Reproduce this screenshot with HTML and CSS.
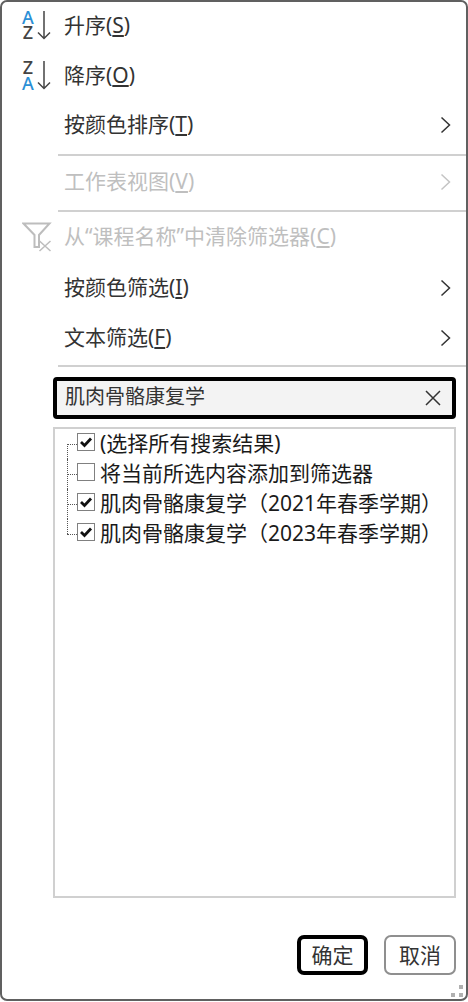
FILE: index.html
```html
<!DOCTYPE html>
<html lang="zh-CN">
<head>
  <meta charset="UTF-8">
  <title>筛选器菜单</title>
  <link rel="stylesheet" href="styles.css">
</head>
<body>

<div class="menu">

  <!-- Sort -->
  <div class="item">
    <span class="icon">
      <svg class="sort-icon" width="30" height="30" viewBox="0 0 30 30">
        <text class="sort-letter blue" x="8" y="14">A</text>
        <text class="sort-letter" x="8" y="29">Z</text>
        <path d="M24 1V28.5M18 22.5L24 28.5L30 22.5" fill="none" stroke="#444" stroke-width="1.5"/>
      </svg>
    </span>
    <span class="label">升序(<u>S</u>)</span>
  </div>
  <div class="item item-second">
    <span class="icon">
      <svg class="sort-icon" width="30" height="30" viewBox="0 0 30 30">
        <text class="sort-letter" x="8" y="14">Z</text>
        <text class="sort-letter blue" x="8" y="29.5">A</text>
        <path d="M24 1V28.5M18 22.5L24 28.5L30 22.5" fill="none" stroke="#444" stroke-width="1.5"/>
      </svg>
    </span>
    <span class="label">降序(<u>O</u>)</span>
  </div>
  <div class="item">
    <span class="icon"></span>
    <span class="label">按颜色排序(<u>T</u>)</span>
    <svg class="chevron" width="12" height="18" viewBox="0 0 12 18"><path d="M1.5 1.5L9.5 9L1.5 16.5" fill="none" stroke="#333" stroke-width="1.5"/></svg>
  </div>
  <div class="sep sep-first"></div>

  <div class="item item-short disabled">
    <span class="icon"></span>
    <span class="label">工作表视图(<u>V</u>)</span>
    <svg class="chevron" width="12" height="18" viewBox="0 0 12 18"><path d="M1.5 1.5L9.5 9L1.5 16.5" fill="none" stroke="#c4c4c4" stroke-width="1.5"/></svg>
  </div>
  <div class="sep"></div>

  <!-- Filter -->
  <div class="item item-clear disabled">
    <span class="icon">
      <svg class="filter-icon" width="30" height="30" viewBox="0 0 30 30"><path d="M1.5 1.5H27.5L17 13V25H12.5V13Z" fill="none" stroke="#bdbdbd" stroke-width="2"/><path d="M17.5 19L28.5 29M28.5 19L17.5 29" stroke="#bdbdbd" stroke-width="1.5"/></svg>
    </span>
    <span class="label">从“课程名称”中清除筛选器(<u>C</u>)</span>
  </div>
  <div class="item">
    <span class="icon"></span>
    <span class="label">按颜色筛选(<u>I</u>)</span>
    <svg class="chevron" width="12" height="18" viewBox="0 0 12 18"><path d="M1.5 1.5L9.5 9L1.5 16.5" fill="none" stroke="#333" stroke-width="1.5"/></svg>
  </div>
  <div class="item">
    <span class="icon"></span>
    <span class="label">文本筛选(<u>F</u>)</span>
    <svg class="chevron" width="12" height="18" viewBox="0 0 12 18"><path d="M1.5 1.5L9.5 9L1.5 16.5" fill="none" stroke="#333" stroke-width="1.5"/></svg>
  </div>
  <div class="sep sep-last"></div>

  <div class="search-box">
    <span class="search-text">肌肉骨骼康复学</span>
    <svg width="16" height="16" viewBox="0 0 16 16"><path d="M1 1L15 15M15 1L1 15" stroke="#333" stroke-width="1.5"/></svg>
  </div>

  <div class="list-box">
    <div class="tree-row">
      <span class="branch branch-first"></span>
      <span class="check"><svg width="14" height="12" viewBox="0 0 14 12"><path d="M2 6L5.5 9.5L12 2.5" fill="none" stroke="#111" stroke-width="2.8"/></svg></span>
      <span class="tree-label">(选择所有搜索结果)</span>
    </div>
    <div class="tree-row">
      <span class="branch"></span>
      <span class="check"></span>
      <span class="tree-label">将当前所选内容添加到筛选器</span>
    </div>
    <div class="tree-row">
      <span class="branch"></span>
      <span class="check"><svg width="14" height="12" viewBox="0 0 14 12"><path d="M2 6L5.5 9.5L12 2.5" fill="none" stroke="#111" stroke-width="2.8"/></svg></span>
      <span class="tree-label">肌肉骨骼康复学（2021年春季学期）</span>
    </div>
    <div class="tree-row">
      <span class="branch branch-last"></span>
      <span class="check"><svg width="14" height="12" viewBox="0 0 14 12"><path d="M2 6L5.5 9.5L12 2.5" fill="none" stroke="#111" stroke-width="2.8"/></svg></span>
      <span class="tree-label">肌肉骨骼康复学（2023年春季学期）</span>
    </div>
  </div>

  <div class="buttons">
    <button class="button button-ok">确定</button>
    <button class="button">取消</button>
  </div>

  <!-- Resize grip -->
  <div class="grip"><i></i><i></i><i></i></div>
</div>

</body>
</html>
```
FILE: styles.css
```css
html, body {
  margin: 0;
  padding: 0;
  background-color: #fff;
}
body {
  font-family: "Noto Sans", "Noto Sans CJK SC", sans-serif;
  color: #333;
}
.menu {
  position: relative;
  box-sizing: border-box;
  width: 468px;
  height: 1001px;
  display: flex;
  flex-direction: column;
  background-color: #fff;
  border: 2px solid #606060;
  border-radius: 7px;
}
.item {
  box-sizing: border-box;
  display: flex;
  align-items: center;
  height: 50px;
  flex: none;
  padding-right: 14px;
  font-size: 21px;
}
.item-second {
  height: 49px;
}
.item-short {
  height: 54px;
}
.item-clear {
  height: 52px;
}
.icon {
  width: 46px;
  height: 30px;
  margin-left: 16px;
  flex: none;
  display: flex;
  align-items: center;
}
.label {
  flex: 1;
  padding-bottom: 6px;
  white-space: nowrap;
}
.chevron {
  margin-bottom: 3px;
}
.disabled {
  color: #bfbfbf;
}
.sort-icon {
  margin: 0 0 4px 2px;
  overflow: visible;
}
.sort-letter {
  font-family: "Noto Sans", sans-serif;
  font-size: 18px;
  font-weight: 500;
  text-anchor: middle;
  fill: #444;
}
.sort-letter.blue {
  fill: #2b8fd6;
}
.filter-icon {
  margin: 0 0 2px 4px;
}
.sep {
  height: 2px;
  margin-left: 56px;
  flex: none;
  background-color: #d0d0d0;
}
.sep-first {
  margin-top: 3px;
}
.sep-last {
  margin-top: 1px;
}
.search-box {
  box-sizing: border-box;
  height: 42px;
  margin: 10px 10px 0 51px;
  padding: 0 11px 0 8px;
  flex: none;
  display: flex;
  align-items: center;
  justify-content: space-between;
  background-color: #f3f3f3;
  border: 4px solid #000;
  border-radius: 4px;
}
.search-text {
  font-size: 20px;
  padding-bottom: 6px;
}
.list-box {
  box-sizing: border-box;
  height: 471px;
  margin: 8px 10px 0 51px;
  padding: 0 0 0 12px;
  flex: none;
  border: 2px solid #d0d0d0;
}
.tree-row {
  display: flex;
  align-items: center;
  height: 30px;
}
.branch {
  position: relative;
  align-self: stretch;
  width: 10px;
  flex: none;
}
.branch::before {
  content: "";
  position: absolute;
  top: 50%;
  left: 0;
  width: 100%;
  border-top: 1px dotted #555;
}
.branch::after {
  content: "";
  position: absolute;
  top: 0;
  bottom: 0;
  left: 0;
  border-left: 1px dotted #555;
}
.branch-first::after {
  top: 50%;
}
.branch-last::after {
  bottom: 50%;
}
.check {
  box-sizing: border-box;
  width: 18px;
  height: 18px;
  margin-bottom: 4px;
  flex: none;
  display: flex;
  align-items: center;
  justify-content: center;
  border: 1px solid #808080;
  background-color: #fff;
}
.tree-label {
  margin-left: 5px;
  padding-bottom: 2px;
  font-size: 21px;
  line-height: 28px;
  color: #1a1a1a;
  white-space: nowrap;
}
.buttons {
  display: flex;
  justify-content: flex-end;
  gap: 16px;
  margin: 37px 10px 0 0;
}
.button {
  box-sizing: border-box;
  width: 72px;
  height: 40px;
  padding: 0;
  font-family: inherit;
  font-size: 21px;
  line-height: 1;
  color: #333;
  background-color: #fff;
  border: 2px solid #8f8f8f;
  border-radius: 7px;
}
.button-ok {
  width: 71px;
  border: 4px solid #000;
}
.grip {
  position: absolute;
  right: 3px;
  bottom: 2px;
  width: 12px;
  height: 12px;
  display: grid;
  grid-template-columns: 4px 4px;
  grid-template-rows: 4px 4px;
  gap: 4px;
}
.grip i {
  background-color: #b0b0b0;
}
.grip i:first-child {
  grid-column: 2;
}
```
